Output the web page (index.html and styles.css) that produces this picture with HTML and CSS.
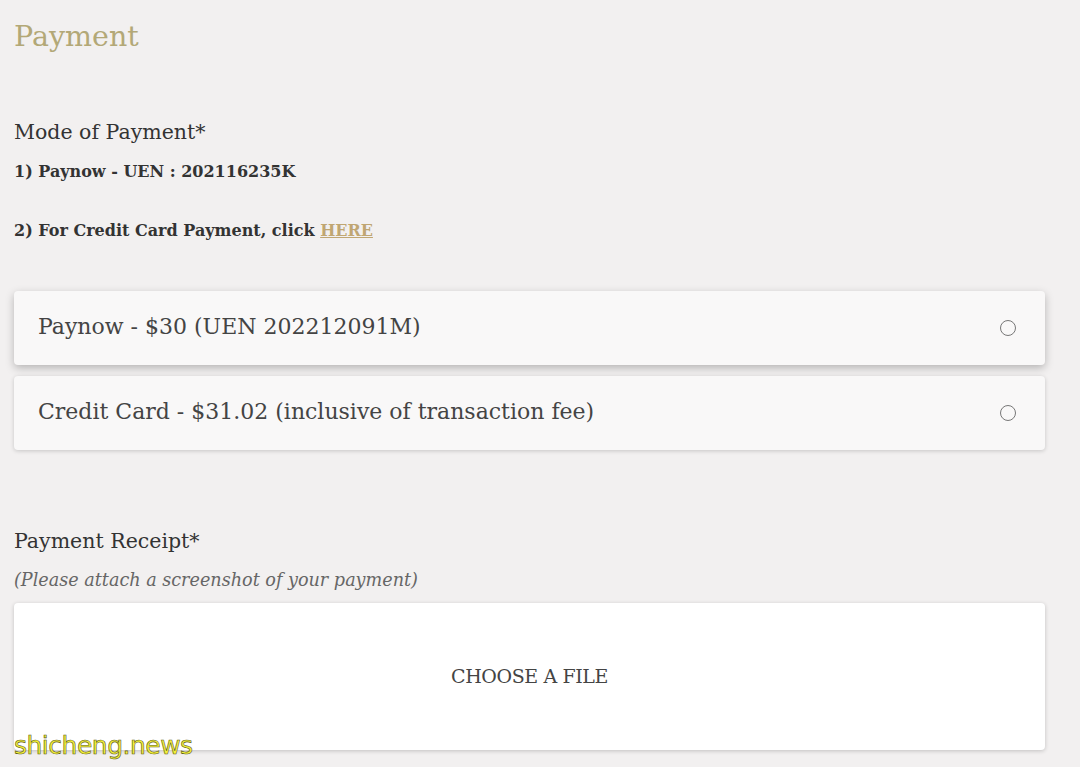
FILE: index.html
```html
<!DOCTYPE html>
<html>
<head>
<meta charset="utf-8">
<link rel="stylesheet" href="styles.css">
</head>
<body>
<div class="page">
  <h1 class="title">Payment</h1>

  <section class="field mode">
    <div class="label">Mode of Payment*</div>
    <p class="note">1) Paynow - UEN : 202116235K</p>
    <p class="note note-2">2) For Credit Card Payment, click <a class="link" href="#">HERE</a></p>
  </section>

  <div class="options">
    <label class="option raised">
      <span class="option-text">Paynow - $30 (UEN 202212091M)</span>
      <span class="radio"></span>
    </label>
    <label class="option">
      <span class="option-text">Credit Card - $31.02 (inclusive of transaction fee)</span>
      <span class="radio"></span>
    </label>
  </div>

  <section class="field receipt">
    <div class="label">Payment Receipt*</div>
    <p class="hint">(Please attach a screenshot of your payment)</p>
    <div class="filebox"><span class="choose">CHOOSE A FILE</span></div>
  </section>

  <div class="watermark">shicheng.news</div>
</div>
</body>
</html>
```

FILE: styles.css
```css
html, body {
  margin: 0;
  padding: 0;
}
body {
  background: #f2f0f0;
  font-family: "DejaVu Serif", "Liberation Serif", serif;
  color: #333;
  width: 1080px;
  height: 767px;
  overflow: hidden;
}
.page {
  position: relative;
  padding: 0 35px 0 14px;
  height: 767px;
}
.title {
  margin: 0;
  padding-top: 19px;
  font-weight: normal;
  font-size: 28.5px;
  line-height: 36px;
  color: #b3a877;
}
.field.mode {
  margin-top: 63px;
}
.label {
  font-size: 20.5px;
  line-height: 28px;
  color: #333;
}
.note {
  margin: 14px 0 0;
  font-size: 16px;
  line-height: 24px;
  font-weight: bold;
  color: #333;
}
.note-2 {
  margin-top: 35px;
}
.link {
  color: #c0a672;
  text-decoration: underline;
}
.options {
  margin-top: 48px;
  display: flex;
  flex-direction: column;
  gap: 11px;
}
.option {
  display: flex;
  align-items: center;
  justify-content: space-between;
  height: 74px;
  background: #f9f8f8;
  border-radius: 4px;
  box-shadow: 0 1px 4px rgba(0,0,0,0.18);
  padding: 0 29px 0 24px;
  box-sizing: border-box;
}
.option.raised {
  box-shadow: 0 3px 8px rgba(0,0,0,0.25);
}
.option-text {
  font-size: 22px;
  color: #444;
  margin-top: -3px;
}
.radio {
  width: 16px;
  height: 16px;
  border: 1.6px solid #777;
  border-radius: 50%;
  box-sizing: border-box;
}
.field.receipt {
  margin-top: 77px;
}
.hint {
  margin: 13px 0 0;
  font-style: italic;
  font-size: 17.6px;
  line-height: 24px;
  color: #666;
}
.filebox {
  margin-top: 11px;
  height: 147px;
  background: #fff;
  border-radius: 4px;
  box-shadow: 0 1px 4px rgba(0,0,0,0.2);
  display: flex;
  align-items: center;
  justify-content: center;
}
.choose {
  font-size: 19px;
  color: #444;
  letter-spacing: -0.4px;
  margin-top: -2px;
}
.watermark {
  position: absolute;
  left: 14px;
  top: 731px;
  font-family: "DejaVu Sans", sans-serif;
  font-size: 25px;
  color: #f4f03a;
  -webkit-text-stroke: 0.6px #5a5a18;
  letter-spacing: -0.5px;
}
```
